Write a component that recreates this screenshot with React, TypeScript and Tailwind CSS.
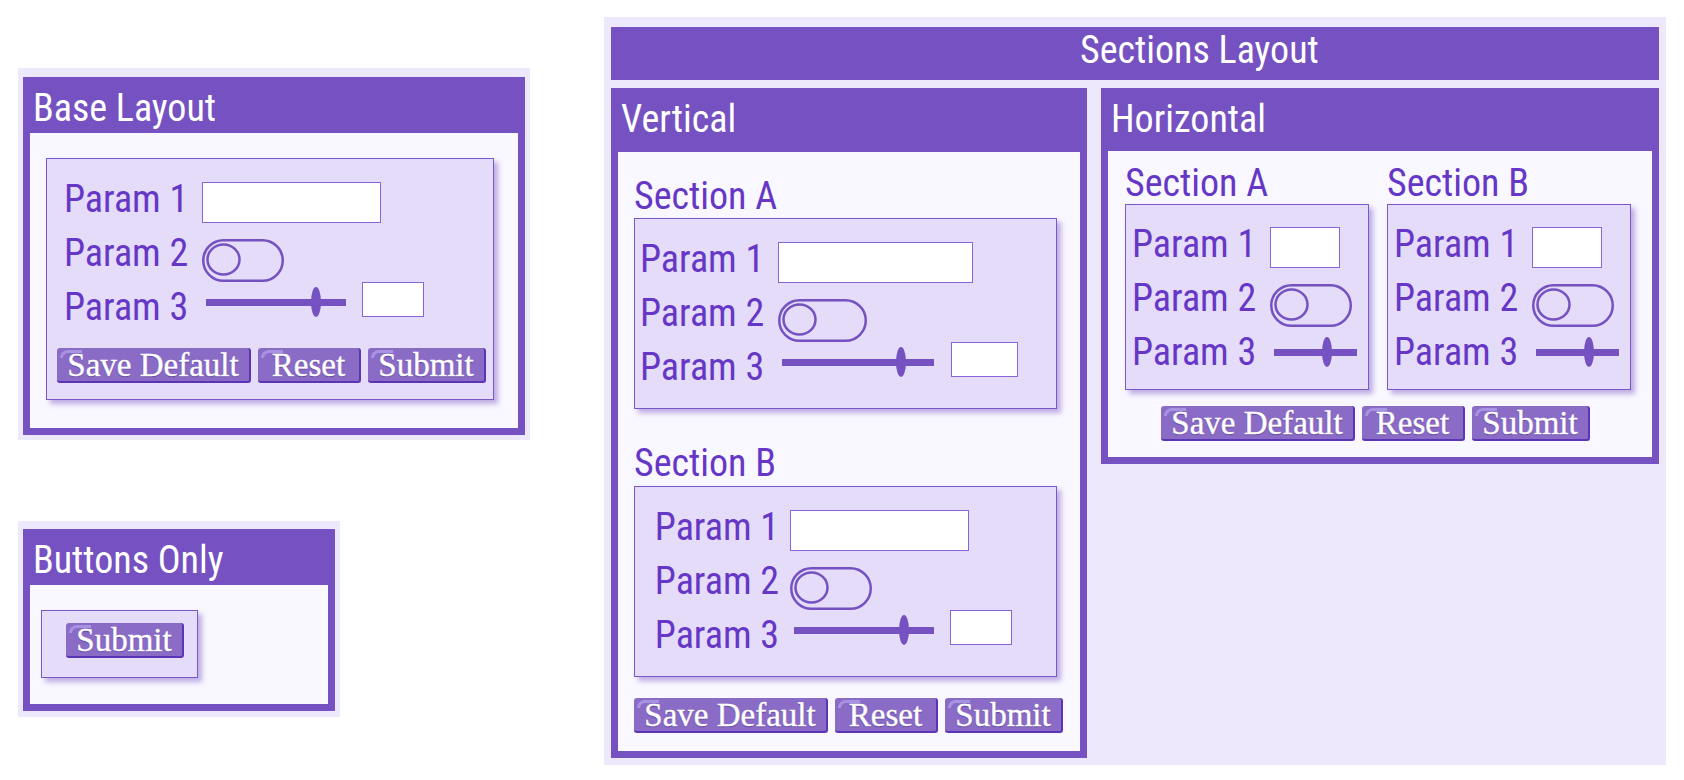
import React from "react";

type BtnProps = { label: string; w: string };

const Btn: React.FC<BtnProps> = ({ label, w }) => (
  <button
    type="button"
    className={`relative ${w} h-[35px] shrink-0 overflow-hidden rounded-[3px] border-r-2 border-b-2 border-[#5b35b6] bg-[#8a6bc5] text-center font-['Liberation_Serif',serif] text-[33px] leading-[35px] text-white [-webkit-text-stroke:0.4px_white] [text-shadow:0_1px_1px_rgba(60,30,120,0.6)]`}
  >
    <span className="absolute left-[3px] top-[2px] h-[8px] w-[22px] rounded-tl-[12px] border-t-[3px] border-l-[3px] border-[#a892e2]" />
    {label}
  </button>
);

const ButtonRow: React.FC<{ className?: string }> = ({ className = "" }) => (
  <div className={`flex gap-[7px] ${className}`}>
    <Btn label="Save Default" w="w-[194px]" />
    <Btn label="Reset" w="w-[103px]" />
    <Btn label="Submit" w="w-[118px]" />
  </div>
);

const Toggle: React.FC<{ w: number }> = ({ w }) => (
  <svg width={w} height={43} viewBox={`0 0 ${w} 43`} className="mt-[14px] shrink-0">
    <rect x="1.25" y="1.25" width={w - 2.5} height="40.5" rx="20.25" fill="none" stroke="#7551c1" strokeWidth="2.5" />
    <ellipse cx="21.5" cy="20.5" rx="16" ry="15" fill="none" stroke="#7551c1" strokeWidth="2.5" />
  </svg>
);

type SliderProps = { track: string; thumb: string; shift?: string };

const Slider: React.FC<SliderProps> = ({ track, thumb, shift = "mb-[10px]" }) => (
  <div className={`relative ml-[4px] flex h-[30px] shrink-0 items-center ${track} ${shift}`}>
    <div className="h-[7px] w-full bg-[#7551c1]" />
    <div className={`absolute top-0 h-[30px] w-[10px] rounded-[50%] bg-[#7551c1] ${thumb}`} />
  </div>
);

const Row: React.FC<{ label: string; labelCls: string; children: React.ReactNode }> = ({ label, labelCls, children }) => (
  <div className="flex h-[54px] items-center">
    <span className={`w-[138px] shrink-0 text-[38px] leading-[44px] text-[#6637c6] ${labelCls}`}>{label}</span>
    {children}
  </div>
);

type CardProps = {
  cls: string;
  rowsCls: string;
  labelCls?: string;
  input: string;
  toggle: number;
  track: string;
  thumb: string;
  num?: string;
  sliderShift?: string;
  children?: React.ReactNode;
};

const ParamCard: React.FC<CardProps> = ({ cls, rowsCls, labelCls = "", input, toggle, track, thumb, num, sliderShift, children }) => (
  <div className={`border border-[#7b57cc] bg-[#e4dcf9] shadow-[4px_4px_5px_rgba(117,81,193,0.45)] ${cls}`}>
    <div className={rowsCls}>
      <Row label="Param 1" labelCls={labelCls}>
        <input type="text" className={`mt-[7px] h-[41px] shrink-0 border border-[#8863d9] bg-white outline-none ${input}`} />
      </Row>
      <Row label="Param 2" labelCls={labelCls}>
        <Toggle w={toggle} />
      </Row>
      <Row label="Param 3" labelCls={labelCls}>
        <Slider track={track} thumb={thumb} shift={sliderShift} />
        {num && <input type="text" className={`mb-[15px] h-[35px] shrink-0 border border-[#8863d9] bg-white outline-none ${num}`} />}
      </Row>
    </div>
    {children}
  </div>
);

type PanelProps = { title: string; frame: string; header: string; body: string; children: React.ReactNode };

const Panel: React.FC<PanelProps> = ({ title, frame, header, body, children }) => (
  <div className={`bg-[#7551c1] px-[7px] pb-[7px] ${frame}`}>
    <div className={`${header} pl-[3px] pt-[9px] text-[38px] leading-[44px] text-white`}>{title}</div>
    <div className={`bg-[#f9f7ff] ${body}`}>{children}</div>
  </div>
);

const SectionLabel: React.FC<{ text: string }> = ({ text }) => (
  <div className="text-[38px] leading-[44px] text-[#6637c6]">{text}</div>
);

export default function App() {
  return (
    <div className="flex min-h-screen items-start bg-white pl-[18px] font-['Roboto_Condensed',Roboto,sans-serif]">
      <div className="flex flex-col items-start pt-[68px]">
        <div className="bg-[#eee8fd] px-[5px] pt-[9px] pb-[5px]">
          <Panel title="Base Layout" frame="w-[502px]" header="h-[56px]" body="pt-[25px] pl-[16px] pr-[24px] pb-[28px]">
            <ParamCard
              cls="w-[448px] pt-[13px] pb-[16px] pl-[10px] pr-[6px]"
              rowsCls="pl-[7px]"
              input="w-[179px]"
              toggle={82}
              track="w-[140px]"
              thumb="left-[105px]"
              num="ml-[16px] w-[62px]"
            >
              <ButtonRow className="mt-[14px]" />
            </ParamCard>
          </Panel>
        </div>

        <div className="mt-[81px] bg-[#eee8fd] px-[5px] pt-[8px] pb-[6px]">
          <Panel title="Buttons Only" frame="w-[312px]" header="h-[56px]" body="pt-[25px] pl-[11px] pb-[26px]">
            <div className="w-[157px] border border-[#7b57cc] bg-[#e4dcf9] pt-[12px] pb-[19px] pl-[24px] shadow-[4px_4px_5px_rgba(117,81,193,0.45)]">
              <Btn label="Submit" w="w-[118px]" />
            </div>
          </Panel>
        </div>
      </div>

      <div className="ml-[74px] mt-[17px] w-[1062px] bg-[#eee8fd] px-[7px] pt-[10px] pb-[7px]">
        <div className="h-[53px] bg-[#7551c1] pl-[469px] pt-[1px] text-[38px] leading-[44px] text-white">Sections Layout</div>

        <div className="mt-[8px] flex items-start gap-[14px]">
          <Panel title="Vertical" frame="w-[476px]" header="h-[64px]" body="pt-[22px] pl-[16px] pb-[18px]">
            <SectionLabel text="Section A" />
            <ParamCard
              cls="w-[423px] pt-[13px] pb-[14px]"
              rowsCls="pl-[5px]"
              input="w-[195px]"
              toggle={89}
              track="w-[152px]"
              thumb="left-[114px]"
              num="ml-[17px] w-[67px]"
            />
            <div className="mt-[32px]">
              <SectionLabel text="Section B" />
            </div>
            <ParamCard
              cls="mt-[1px] w-[423px] pt-[13px] pb-[14px]"
              rowsCls="pl-[17px]"
              labelCls="pr-[11px] text-right"
              input="w-[179px]"
              toggle={82}
              track="w-[140px]"
              thumb="left-[105px]"
              num="ml-[16px] w-[62px]"
            />
            <ButtonRow className="mt-[21px]" />
          </Panel>

          <Panel title="Horizontal" frame="w-[558px]" header="h-[63px]" body="pt-[10px] pl-[17px] pr-[21px] pb-[16px]">
            <div className="flex gap-[18px]">
              <div>
                <SectionLabel text="Section A" />
                <ParamCard
                  cls="-mt-[1px] w-[244px] pt-[12px] pb-[10px]"
                  rowsCls="pl-[6px]"
                  input="w-[70px]"
                  toggle={82}
                  track="w-[83px]"
                  thumb="left-[48px]"
                  sliderShift="mb-0"
                />
              </div>
              <div>
                <SectionLabel text="Section B" />
                <ParamCard
                  cls="-mt-[1px] w-[244px] pt-[12px] pb-[10px]"
                  rowsCls="pl-[6px]"
                  input="w-[70px]"
                  toggle={82}
                  track="w-[83px]"
                  thumb="left-[48px]"
                  sliderShift="mb-0"
                />
              </div>
            </div>
            <ButtonRow className="mt-[16px] justify-center pr-[5px]" />
          </Panel>
        </div>
      </div>
    </div>
  );
}
